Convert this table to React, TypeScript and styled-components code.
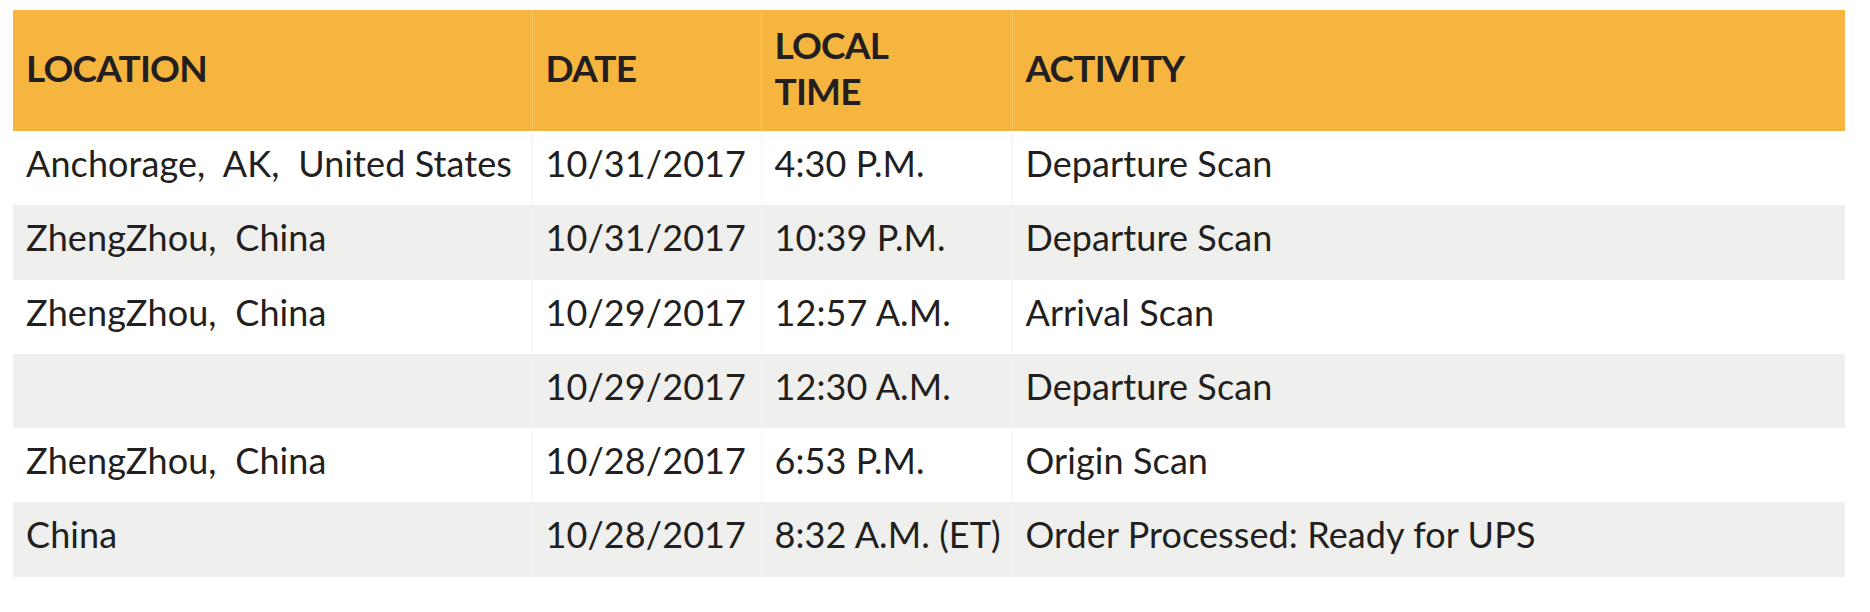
import styled, { createGlobalStyle } from "styled-components"

interface IScan {
    location : string,
    date : string,
    time : string,
    activity : string
}

const scans : IScan[] = [
    { location : "Anchorage,\u00a0 AK,\u00a0 United States", date : "10/31/2017", time : "4:30 P.M.", activity : "Departure Scan" },
    { location : "ZhengZhou,\u00a0 China", date : "10/31/2017", time : "10:39 P.M.", activity : "Departure Scan" },
    { location : "ZhengZhou,\u00a0 China", date : "10/29/2017", time : "12:57 A.M.", activity : "Arrival Scan" },
    { location : "", date : "10/29/2017", time : "12:30 A.M.", activity : "Departure Scan" },
    { location : "ZhengZhou,\u00a0 China", date : "10/28/2017", time : "6:53 P.M.", activity : "Origin Scan" },
    { location : "China", date : "10/28/2017", time : "8:32 A.M. (ET)", activity : "Order Processed: Ready for UPS" },
]

export default function App(){
    return(
        <>
            <GlobalStyle />
            <Page>
                <Table>
                    <colgroup>
                        <col style={{width : 519}} />
                        <col style={{width : 229}} />
                        <col style={{width : 251}} />
                        <col />
                    </colgroup>
                    <thead>
                        <tr>
                            <HeadCell>LOCATION</HeadCell>
                            <HeadCell>DATE</HeadCell>
                            <HeadCell>LOCAL<br />TIME</HeadCell>
                            <HeadCell>ACTIVITY</HeadCell>
                        </tr>
                    </thead>
                    <tbody>
                        {
                            scans.map((scan, index) =>
                                <Row key={index} $shaded={index % 2 === 1}>
                                    <Cell>{scan.location}</Cell>
                                    <Cell>{scan.date}</Cell>
                                    <Cell>{scan.time}</Cell>
                                    <Cell>{scan.activity}</Cell>
                                </Row>
                            )
                        }
                    </tbody>
                </Table>
            </Page>
        </>
    )
}

const GlobalStyle = createGlobalStyle`
    body {
        margin : 0;
        background : #ffffff;
        font-family : Lato, "Open Sans", sans-serif;
        color : #231f20;
    }
`
const Page = styled.main`
    padding : 10px 0 0 13px;
`
const Table = styled.table`
    width : 1832px;
    table-layout : fixed;
    border-collapse : collapse;
    border-spacing : 0;
`
const HeadCell = styled.th`
    height : 121px;
    box-sizing : border-box;
    padding : 0 12px 6px 13px;
    background : #f6b53f;
    text-align : left;
    vertical-align : middle;
    font-size : 37px;
    font-weight : 700;
    line-height : 46px;
    letter-spacing : -0.8px;
    color : #231f20;
    & + & {
        border-left : 1px solid #f8c46a;
    }
`
const Row = styled.tr<{ $shaded : boolean }>`
    height : 74.3px;
    background : ${props => props.$shaded ? "#efefed" : "#ffffff"};
`
const Cell = styled.td`
    box-sizing : border-box;
    padding : 8px 12px 0 13px;
    vertical-align : top;
    font-size : 36px;
    line-height : 49px;
    letter-spacing : 0.1px;
    white-space : nowrap;
    & + & {
        border-left : 1px solid #f3f3f2;
    }
`
